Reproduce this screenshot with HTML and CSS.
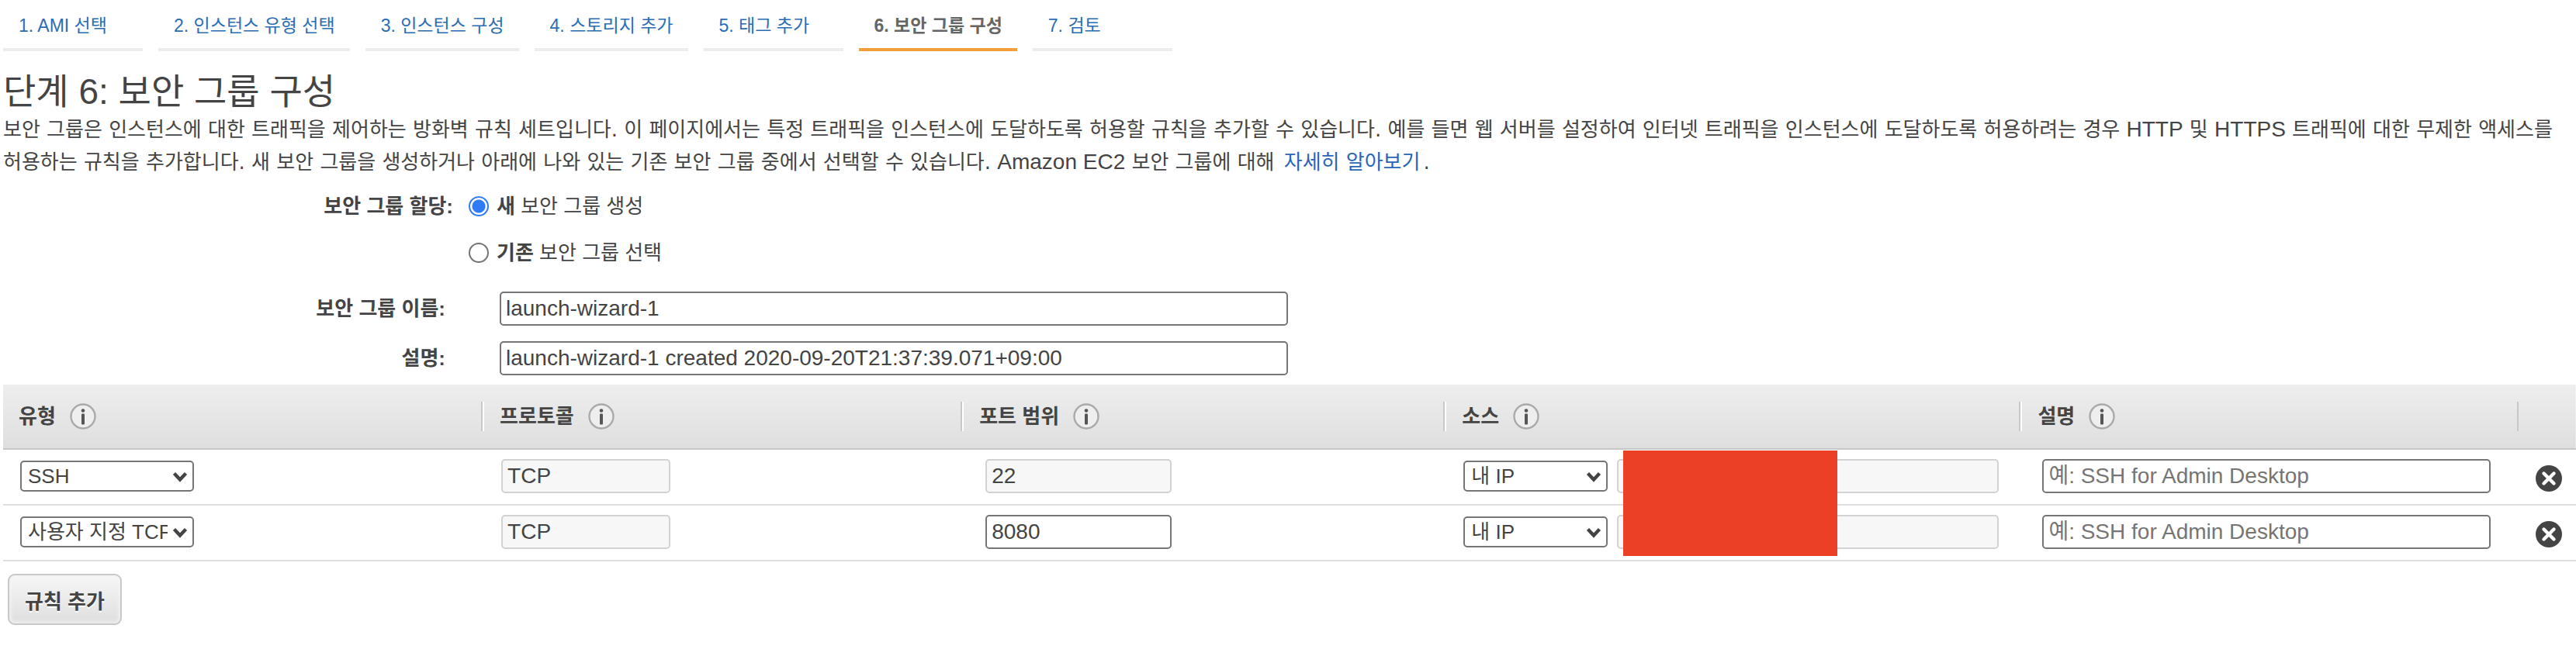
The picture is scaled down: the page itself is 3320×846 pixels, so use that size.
FILE: index.html
```html
<!DOCTYPE html>
<html lang="ko">
<head>
<meta charset="utf-8">
<title>단계 6: 보안 그룹 구성</title>
<link rel="stylesheet" href="styles.css">
</head>
<body>
<svg class="sprite" aria-hidden="true">
  <symbol id="info" viewBox="0 0 34 34">
    <circle cx="17" cy="17" r="15.5" fill="#eee" stroke="#aaa" stroke-width="2.4"/>
    <circle cx="17" cy="9.5" r="2.3" fill="#555"/>
    <rect x="15" y="13.5" width="4" height="14" rx="1" fill="#555"/>
  </symbol>
  <symbol id="remove" viewBox="0 0 34 34">
    <circle cx="17" cy="17" r="17" fill="#444"/>
    <path d="M10.5 10.5 23.5 23.5M23.5 10.5 10.5 23.5" stroke="#fff" stroke-width="4.4" stroke-linecap="round"/>
  </symbol>
  <symbol id="chevron" viewBox="0 0 20 14">
    <path d="M2.5 2.5 10 10.5 17.5 2.5" fill="none" stroke="#444" stroke-width="4.4"/>
  </symbol>
</svg>

<nav class="steps">
  <a class="step" href="#">1. AMI 선택</a>
  <a class="step" href="#">2. 인스턴스 유형 선택</a>
  <a class="step" href="#">3. 인스턴스 구성</a>
  <a class="step" href="#">4. 스토리지 추가</a>
  <a class="step" href="#">5. 태그 추가</a>
  <span class="step step-active" aria-current="step">6. 보안 그룹 구성</span>
  <a class="step" href="#">7. 검토</a>
</nav>

<main>
  <h1 class="title">단계 6: 보안 그룹 구성</h1>
  <p class="intro">보안 그룹은 인스턴스에 대한 트래픽을 제어하는 방화벽 규칙 세트입니다. 이 페이지에서는 특정 트래픽을 인스턴스에 도달하도록 허용할 규칙을 추가할 수 있습니다. 예를 들면 웹 서버를 설정하여 인터넷 트래픽을 인스턴스에 도달하도록 허용하려는 경우 <span class="latin">HTTP</span> 및 <span class="latin">HTTPS</span> 트래픽에 대한 무제한 액세스를 허용하는 규칙을 추가합니다. 새 보안 그룹을 생성하거나 아래에 나와 있는 기존 보안 그룹 중에서 선택할 수 있습니다. <span class="latin">Amazon EC2</span> 보안 그룹에 대해 <a class="more" href="#">자세히 알아보기</a>.</p>

  <div class="assign" role="radiogroup" aria-labelledby="assign-label">
    <span class="assign-label" id="assign-label">보안 그룹 할당:</span>
    <div class="options">
      <label class="option"><input class="radio" type="radio" name="assign" checked><span><b>새</b> 보안 그룹 생성</span></label>
      <label class="option"><input class="radio" type="radio" name="assign"><span><b>기존</b> 보안 그룹 선택</span></label>
    </div>
  </div>

  <div class="fields">
    <label class="field-label" for="name">보안 그룹 이름:</label>
    <input class="box" id="name" type="text" value="launch-wizard-1">
    <label class="field-label" for="desc">설명:</label>
    <input class="box" id="desc" type="text" value="launch-wizard-1 created 2020-09-20T21:37:39.071+09:00">
  </div>

  <table class="rules">
    <colgroup>
      <col class="col-type"><col class="col-protocol"><col class="col-port"><col class="col-source"><col class="col-desc"><col>
    </colgroup>
    <thead>
      <tr>
        <th><div class="head head-first">유형<svg class="info"><use href="#info"/></svg></div></th>
        <th><div class="head">프로토콜<svg class="info"><use href="#info"/></svg></div></th>
        <th><div class="head">포트 범위<svg class="info"><use href="#info"/></svg></div></th>
        <th><div class="head">소스<svg class="info"><use href="#info"/></svg></div></th>
        <th><div class="head head-last">설명<svg class="info"><use href="#info"/></svg></div></th>
        <th></th>
      </tr>
    </thead>
    <tbody>
      <tr>
        <td><div class="cell cell-first"><span class="pick pick-type"><select class="select" aria-label="유형"><option>SSH</option></select><svg class="chevron"><use href="#chevron"/></svg></span></div></td>
        <td><div class="cell"><input class="box box-protocol" type="text" aria-label="프로토콜" value="TCP" disabled></div></td>
        <td><div class="cell cell-port"><input class="box box-port" type="text" aria-label="포트 범위" value="22" disabled></div></td>
        <td><div class="cell cell-source"><span class="pick pick-source"><select class="select" aria-label="소스"><option>내 IP</option></select><svg class="chevron"><use href="#chevron"/></svg></span><span class="address"><input class="box" type="text" aria-label="소스 주소" disabled><span class="mask"></span></span></div></td>
        <td><div class="cell cell-desc"><input class="box" type="text" aria-label="설명" placeholder="예: SSH for Admin Desktop"></div></td>
        <td><div class="cell cell-remove"><button class="remove" type="button" aria-label="삭제"><svg class="remove-icon"><use href="#remove"/></svg></button></div></td>
      </tr>
      <tr>
        <td><div class="cell cell-first"><span class="pick pick-type"><select class="select" aria-label="유형"><option>사용자 지정 TCP</option></select><svg class="chevron"><use href="#chevron"/></svg></span></div></td>
        <td><div class="cell"><input class="box box-protocol" type="text" aria-label="프로토콜" value="TCP" disabled></div></td>
        <td><div class="cell cell-port"><input class="box box-port" type="text" aria-label="포트 범위" value="8080"></div></td>
        <td><div class="cell cell-source"><span class="pick pick-source"><select class="select" aria-label="소스"><option>내 IP</option></select><svg class="chevron"><use href="#chevron"/></svg></span><span class="address"><input class="box" type="text" aria-label="소스 주소" disabled></span></div></td>
        <td><div class="cell cell-desc"><input class="box" type="text" aria-label="설명" placeholder="예: SSH for Admin Desktop"></div></td>
        <td><div class="cell cell-remove"><button class="remove" type="button" aria-label="삭제"><svg class="remove-icon"><use href="#remove"/></svg></button></div></td>
      </tr>
    </tbody>
  </table>

  <button class="add" type="button">규칙 추가</button>
</main>
</body>
</html>
```

FILE: styles.css
```css
* {
  box-sizing: border-box;
}

body {
  margin: 0;
  padding-left: 4px;
  background: #fff;
  color: #444;
  font-family: "Liberation Sans", "Noto Sans CJK KR", sans-serif;
  font-size: 26px;
  line-height: 42px;
}

input,
select,
button {
  color: inherit;
  font-family: inherit;
}

.sprite {
  position: absolute;
  width: 0;
  height: 0;
}

/* Wizard steps */
.steps {
  display: flex;
  gap: 20px;
}

.step {
  min-width: 180px;
  padding: 16px 19px 12px 20px;
  border-bottom: 4px solid #ececec;
  color: #2a6db5;
  font-size: 23px;
  line-height: 34px;
  text-decoration: none;
  white-space: nowrap;
}

.step-active {
  border-color: #f19e38;
  color: #666;
  font-weight: bold;
}

.title {
  margin: 24px 0 0;
  font-size: 46px;
  font-weight: normal;
  line-height: 56px;
}

.intro {
  margin: 0;
  font-family: "DejaVu Sans", "Noto Sans CJK KR", sans-serif;
  word-break: keep-all;
}

.latin {
  font-family: "Liberation Sans", sans-serif;
  font-size: 28px;
  line-height: 1;
}

.more {
  margin: 0 4px;
  color: #2864b8;
  text-decoration: none;
}

/* Group assignment */
.assign {
  display: flex;
  gap: 20px;
  margin-top: 16px;
  line-height: 40px;
}

.assign-label {
  width: 580px;
  font-weight: bold;
  text-align: right;
}

.options {
  display: grid;
  gap: 20px;
}

.option {
  display: flex;
  align-items: center;
  gap: 10px;
}

.radio {
  appearance: none;
  width: 26px;
  height: 26px;
  margin: 0;
  border: 2px solid #757575;
  border-radius: 50%;
  background: #fff;
}

.radio:checked {
  border-color: #2f7bf6;
  background: radial-gradient(circle, #2f7bf6 8px, #fff 9px);
}

.fields {
  display: grid;
  grid-template-columns: 570px minmax(0, 1016px);
  gap: 20px 70px;
  margin: 30px 0 12px;
}

.field-label {
  font-weight: bold;
  line-height: 44px;
  text-align: right;
}

/* Controls */
.box {
  width: 100%;
  height: 44px;
  padding: 0 6px;
  border: 2px solid #757575;
  border-radius: 5px;
  background: #fff;
  font-size: 28px;
}

.box:disabled {
  border-color: #d2d2d2;
  background: #f7f7f7;
  color: #444;
}

.box::placeholder {
  color: #757575;
}

.box-protocol {
  width: 218px;
}

.box-port {
  width: 240px;
}

.pick {
  position: relative;
  flex: none;
  height: 40px;
}

.pick-type {
  width: 224px;
}

.pick-source {
  width: 186px;
}

.select {
  appearance: none;
  display: block;
  width: 100%;
  height: 100%;
  padding: 0 32px 0 8px;
  border: 2px solid #757575;
  border-radius: 5px;
  background: #fff;
  font-size: 26px;
}

.chevron {
  position: absolute;
  top: 14px;
  right: 8px;
  width: 20px;
  height: 14px;
  pointer-events: none;
}

/* Rules table */
.rules {
  width: 100%;
  table-layout: fixed;
  border-collapse: separate;
  border-spacing: 0;
}

.col-type,
.col-protocol {
  width: 18.64%;
}

.col-port {
  width: 18.76%;
}

.col-source {
  width: 22.38%;
}

.col-desc {
  width: 19.36%;
}

thead tr {
  background: linear-gradient(#eee, #dedede);
}

th {
  height: 84px;
  padding: 0;
  border-bottom: 2px solid #c8c8c8;
  text-align: left;
}

.head {
  display: flex;
  align-items: center;
  gap: 18px;
  height: 38px;
  padding-left: 22px;
  border-right: 2px solid #c8c8c8;
  box-shadow: 2px 0 #fff;
}

.head-first {
  padding-left: 20px;
}

.head-last {
  box-shadow: none;
}

.info {
  width: 34px;
  height: 34px;
}

td {
  padding: 0;
  border-bottom: 2px solid #dedede;
}

.cell {
  display: flex;
  align-items: center;
  height: 70px;
  padding: 0 24px 2px;
}

.cell-first {
  padding-left: 22px;
}

.cell-port {
  padding-left: 30px;
}

.cell-source {
  gap: 12px;
  padding-right: 28px;
}

.cell-desc {
  padding-right: 36px;
  padding-left: 28px;
}

.cell-remove {
  padding: 4px 18px 0 22px;
}

.address {
  position: relative;
  display: flex;
  flex: 1;
}

.mask {
  position: absolute;
  z-index: 1;
  top: -11px;
  left: 8px;
  width: 276px;
  height: 136px;
  background: #eb4026;
}

.remove {
  display: flex;
  padding: 0;
  border: 0;
  background: none;
}

.remove-icon {
  width: 34px;
  height: 34px;
}

.add {
  height: 66px;
  margin: 16px 6px;
  padding: 0 20px;
  border: 2px solid #c8c8c8;
  border-radius: 9px;
  background: linear-gradient(#f7f7f7, #dedede);
  box-shadow: inset 0 0 4px 2px #f2f2f2;
  font-size: 26px;
  font-weight: bold;
  text-shadow: 0 2px #fff;
}
```
